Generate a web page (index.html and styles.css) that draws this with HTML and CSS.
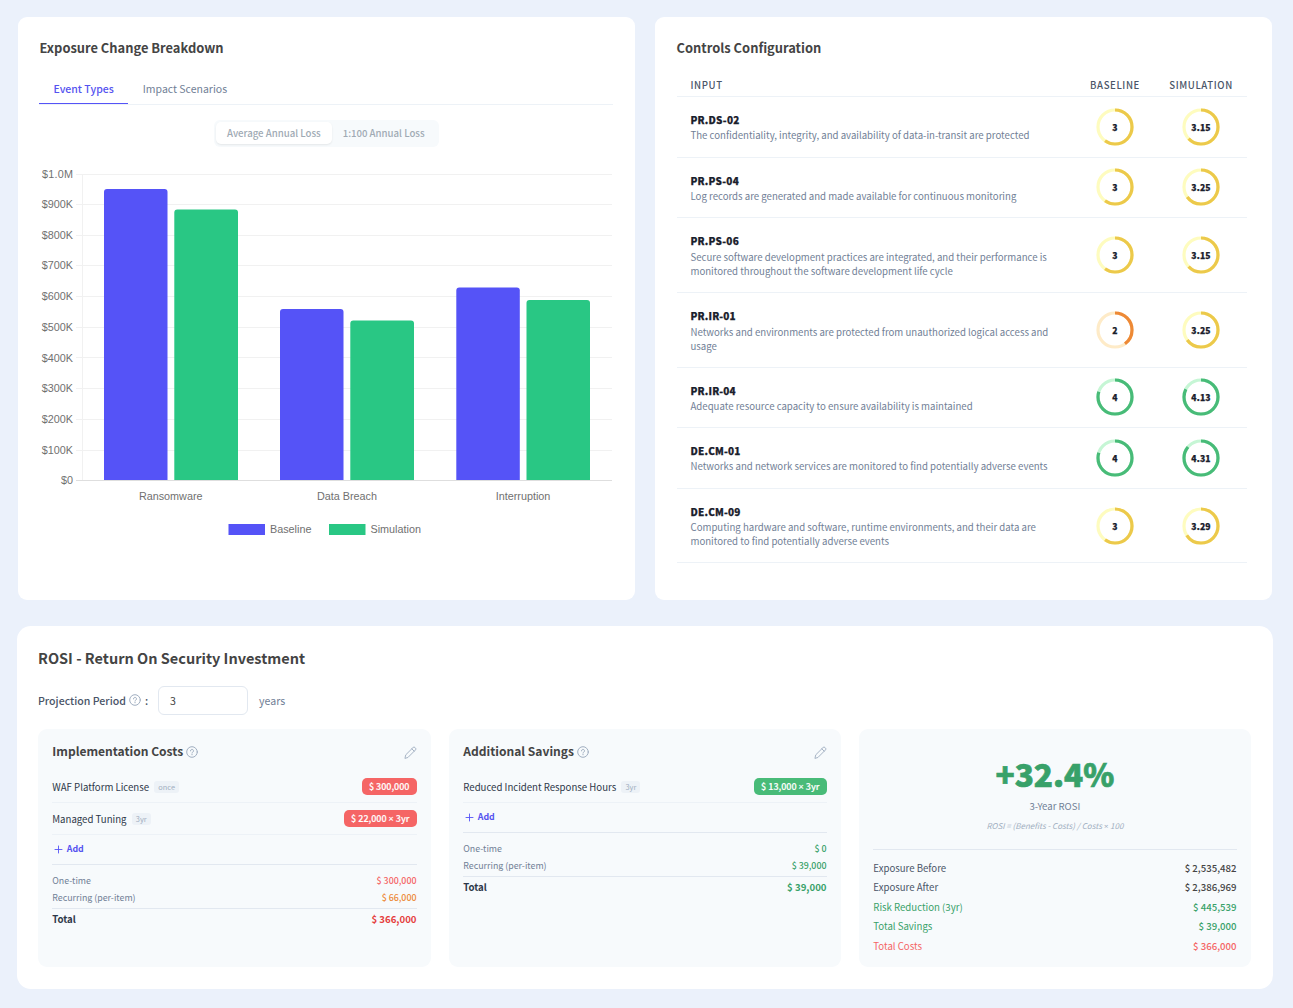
FILE: index.html
```html
<!DOCTYPE html>
<html lang="en">
<head>
<meta charset="utf-8">
<title>Exposure simulation</title>
<link rel="stylesheet" href="styles.css">
</head>
<body>
<svg class="sprite" aria-hidden="true">
  <symbol id="i-help" viewBox="0 0 12 12"><circle cx="6" cy="6" r="5.3"/><path d="M4.5 4.9a1.5 1.5 0 1 1 2.3 1.2c-.5.3-.8.5-.8 1M6 8.4v.4"/></symbol>
  <symbol id="i-pencil" viewBox="0 0 14 14"><path d="M1.100 12.900l.8-3.400 7.900-7.900a1.400 1.400 0 0 1 2 0l.6.6a1.400 1.400 0 0 1 0 2l-7.900 7.900zM8.400 3l2.600 2.600"/></symbol>
  <symbol id="i-plus" viewBox="0 0 9 9"><path d="M4.500 1v7M1 4.500h7"/></symbol>
</svg>
<main class="page">
  <div class="top">
    <section class="card chart-card">
      <h2 class="title">Exposure Change Breakdown</h2>
      <nav class="tabs"><span class="tab tab-on">Event Types</span><span class="tab">Impact Scenarios</span></nav>
      <div class="switch"><span class="opt opt-on">Average Annual Loss</span><span class="opt">1:100 Annual Loss</span></div>
      <svg class="chart" width="574" height="390" viewBox="39 160 574 390">
        <g class="grid">
          <path d="M76 174.5H612M76 204.5H612M76 235.5H612M76 265.5H612M76 296.5H612M76 327.5H612M76 357.5H612M76 388.5H612M76 419.5H612M76 450.5H612M82.5 174V480"/>
        </g>
        <path class="axis" d="M76 480.5H612"/>
        <g class="base">
          <path d="M104 480V192q0-3 3-3H164.500q3 0 3 3V480z"/>
          <path d="M280 480V312q0-3 3-3H340.500q3 0 3 3V480z"/>
          <path d="M456.300 480V290.500q0-3 3-3H516.800q3 0 3 3V480z"/>
          <rect x="228.500" y="524" width="36.500" height="11"/>
        </g>
        <g class="sim">
          <path d="M174.300 480V212.500q0-3 3-3H235q3 0 3 3V480z"/>
          <path d="M350.300 480V323.500q0-3 3-3H411q3 0 3 3V480z"/>
          <path d="M526.500 480V303q0-3 3-3H587q3 0 3 3V480z"/>
          <rect x="329" y="524" width="36.500" height="11"/>
        </g>
        <g class="end">
          <text x="73" y="178.300" textLength="31">$1.0M</text><text x="73" y="208.300">$900K</text><text x="73" y="239.300">$800K</text><text x="73" y="269.300">$700K</text><text x="73" y="300.300">$600K</text><text x="73" y="331">$500K</text><text x="73" y="361.500">$400K</text><text x="73" y="392.300">$300K</text><text x="73" y="423">$200K</text><text x="73" y="454">$100K</text><text x="73" y="484.300">$0</text>
        </g>
        <g class="mid">
          <text x="170.700" y="500.300">Ransomware</text><text x="347" y="500.300">Data Breach</text><text x="523" y="500.300">Interruption</text>
        </g>
        <text x="270" y="533.300">Baseline</text><text x="370.500" y="533.300">Simulation</text>
      </svg>
    </section>

    <section class="card">
      <h2 class="title">Controls Configuration</h2>
      <div class="table">
        <div class="row head"><span>INPUT</span><span class="c">BASELINE</span><span class="c">SIMULATION</span></div>
        <div class="row">
          <div><h3>PR.DS-02</h3><p>The confidentiality, integrity, and availability of data-in-transit are protected</p></div>
          <div class="ring yellow"><svg viewBox="0 0 38 38"><circle cx="19" cy="19" r="17"/><circle class="val" cx="19" cy="19" r="17" pathLength="100" stroke-dasharray="60 100"/></svg><b>3</b></div>
          <div class="ring yellow"><svg viewBox="0 0 38 38"><circle cx="19" cy="19" r="17"/><circle class="val" cx="19" cy="19" r="17" pathLength="100" stroke-dasharray="63 100"/></svg><b>3.15</b></div>
        </div>
        <div class="row">
          <div><h3>PR.PS-04</h3><p>Log records are generated and made available for continuous monitoring</p></div>
          <div class="ring yellow"><svg viewBox="0 0 38 38"><circle cx="19" cy="19" r="17"/><circle class="val" cx="19" cy="19" r="17" pathLength="100" stroke-dasharray="60 100"/></svg><b>3</b></div>
          <div class="ring yellow"><svg viewBox="0 0 38 38"><circle cx="19" cy="19" r="17"/><circle class="val" cx="19" cy="19" r="17" pathLength="100" stroke-dasharray="65 100"/></svg><b>3.25</b></div>
        </div>
        <div class="row two">
          <div><h3>PR.PS-06</h3><p>Secure software development practices are integrated, and their performance is monitored throughout the software development life cycle</p></div>
          <div class="ring yellow"><svg viewBox="0 0 38 38"><circle cx="19" cy="19" r="17"/><circle class="val" cx="19" cy="19" r="17" pathLength="100" stroke-dasharray="60 100"/></svg><b>3</b></div>
          <div class="ring yellow"><svg viewBox="0 0 38 38"><circle cx="19" cy="19" r="17"/><circle class="val" cx="19" cy="19" r="17" pathLength="100" stroke-dasharray="63 100"/></svg><b>3.15</b></div>
        </div>
        <div class="row two">
          <div><h3>PR.IR-01</h3><p>Networks and environments are protected from unauthorized logical access and usage</p></div>
          <div class="ring orange"><svg viewBox="0 0 38 38"><circle cx="19" cy="19" r="17"/><circle class="val" cx="19" cy="19" r="17" pathLength="100" stroke-dasharray="40 100"/></svg><b>2</b></div>
          <div class="ring yellow"><svg viewBox="0 0 38 38"><circle cx="19" cy="19" r="17"/><circle class="val" cx="19" cy="19" r="17" pathLength="100" stroke-dasharray="65 100"/></svg><b>3.25</b></div>
        </div>
        <div class="row">
          <div><h3>PR.IR-04</h3><p>Adequate resource capacity to ensure availability is maintained</p></div>
          <div class="ring green"><svg viewBox="0 0 38 38"><circle cx="19" cy="19" r="17"/><circle class="val" cx="19" cy="19" r="17" pathLength="100" stroke-dasharray="80 100"/></svg><b>4</b></div>
          <div class="ring green"><svg viewBox="0 0 38 38"><circle cx="19" cy="19" r="17"/><circle class="val" cx="19" cy="19" r="17" pathLength="100" stroke-dasharray="82.6 100"/></svg><b>4.13</b></div>
        </div>
        <div class="row">
          <div><h3>DE.CM-01</h3><p>Networks and network services are monitored to find potentially adverse events</p></div>
          <div class="ring green"><svg viewBox="0 0 38 38"><circle cx="19" cy="19" r="17"/><circle class="val" cx="19" cy="19" r="17" pathLength="100" stroke-dasharray="80 100"/></svg><b>4</b></div>
          <div class="ring green"><svg viewBox="0 0 38 38"><circle cx="19" cy="19" r="17"/><circle class="val" cx="19" cy="19" r="17" pathLength="100" stroke-dasharray="86.2 100"/></svg><b>4.31</b></div>
        </div>
        <div class="row two">
          <div><h3>DE.CM-09</h3><p>Computing hardware and software, runtime environments, and their data are monitored to find potentially adverse events</p></div>
          <div class="ring yellow"><svg viewBox="0 0 38 38"><circle cx="19" cy="19" r="17"/><circle class="val" cx="19" cy="19" r="17" pathLength="100" stroke-dasharray="60 100"/></svg><b>3</b></div>
          <div class="ring yellow"><svg viewBox="0 0 38 38"><circle cx="19" cy="19" r="17"/><circle class="val" cx="19" cy="19" r="17" pathLength="100" stroke-dasharray="65.8 100"/></svg><b>3.29</b></div>
        </div>
      </div>
    </section>
  </div>

  <section class="rosi">
    <h2 class="rosi-title">ROSI - Return On Security Investment</h2>
    <div class="period"><span class="plabel">Projection Period</span><svg class="icon help"><use href="#i-help"/></svg><span class="plabel colon">:</span><span class="field">3</span><span class="unit">years</span></div>
    <div class="panels">
      <div class="panel">
        <div class="phead"><h3>Implementation Costs</h3><svg class="icon help"><use href="#i-help"/></svg><svg class="icon pencil"><use href="#i-pencil"/></svg></div>
        <div class="item"><span>WAF Platform License</span><span class="tag">once</span><span class="pill red">$ 300,000</span></div>
        <div class="item"><span>Managed Tuning</span><span class="tag">3yr</span><span class="pill red">$ 22,000 <span class="x">×</span> 3yr</span></div>
        <div class="add"><svg class="icon plus"><use href="#i-plus"/></svg>Add</div>
        <div class="sums">
          <div class="sum"><span>One-time</span><span class="amt t-red">$ 300,000</span></div>
          <div class="sum"><span>Recurring (per-item)</span><span class="amt t-orange">$ 66,000</span></div>
        </div>
        <div class="total"><span>Total</span><span class="t-deep">$ 366,000</span></div>
      </div>
      <div class="panel">
        <div class="phead"><h3>Additional Savings</h3><svg class="icon help"><use href="#i-help"/></svg><svg class="icon pencil"><use href="#i-pencil"/></svg></div>
        <div class="item"><span>Reduced Incident Response Hours</span><span class="tag">3yr</span><span class="pill grn">$ 13,000 <span class="x">×</span> 3yr</span></div>
        <div class="add"><svg class="icon plus"><use href="#i-plus"/></svg>Add</div>
        <div class="sums">
          <div class="sum"><span>One-time</span><span class="amt t-green">$ 0</span></div>
          <div class="sum"><span>Recurring (per-item)</span><span class="amt t-green">$ 39,000</span></div>
        </div>
        <div class="total"><span>Total</span><span class="t-green">$ 39,000</span></div>
      </div>
      <div class="panel result">
        <div class="big">+32.4%</div>
        <div class="sub">3-Year ROSI</div>
        <div class="formula">ROSI = (Benefits - Costs) / Costs <span class="x">×</span> 100</div>
        <div class="lines">
          <div class="line"><span>Exposure Before</span><span class="amt dark">$ 2,535,482</span></div>
          <div class="line"><span>Exposure After</span><span class="amt dark">$ 2,386,969</span></div>
          <div class="line t-green"><span>Risk Reduction (3yr)</span><span class="amt">$ 445,539</span></div>
          <div class="line t-green"><span>Total Savings</span><span class="amt">$ 39,000</span></div>
          <div class="line t-red"><span>Total Costs</span><span class="amt">$ 366,000</span></div>
        </div>
      </div>
    </div>
  </section>
</main>
</body>
</html>
```
FILE: styles.css
```css
* { box-sizing: border-box; }
body { margin: 0; background: #ebf1fb; font-family: "Noto Sans CJK SC", "Noto Sans CJK JP", sans-serif; color: #2d3748; font-size: 11px; }
h2, h3, p { margin: 0; }
.sprite { display: none; }
.page { height: 1008px; overflow: hidden; padding: 17px 20px 0 17px; }
.top { display: grid; grid-template-columns: 617px 617px; gap: 20px; padding-left: 1px; }
.card { height: 583px; background: #fff; border-radius: 9px; padding: 21px 22px 0 21px; }
.title { padding-left: .5px; font-size: 12.900px; line-height: 20px; font-weight: 700; color: #444; }
.tabs { display: flex; height: 30px; margin-top: 17px; border-bottom: 1px solid #edf2f7; line-height: 27px; font-size: 10.500px; color: #718096; }
.tab { padding: 0 14.500px; height: 29px; }
.tab-on { color: #5553f0; font-weight: 500; border-bottom: 1px solid #5553f7; }
.switch { display: flex; width: 225px; height: 27px; margin: 15px 0 0 175px; padding: 2px; background: #f7fafc; border-radius: 6px; font-size: 9.650px; line-height: 23px; font-weight: 500; color: #a0aab4; }
.opt { padding: 0 11px; white-space: nowrap; }
.opt-on { background: #fff; border-radius: 5px; box-shadow: 0 1px 2px rgba(0,0,0,.08); height: 22px; line-height: 23px; }
.chart { display: block; margin-top: 13px; font: 10.800px "Liberation Sans", Arial, sans-serif; fill: #707070; }
.grid path { stroke: #f1f1f1; fill: none; }
.axis { stroke: #dedede; }
.base { fill: #5553f7; }
.sim { fill: #29c784; }
.end { text-anchor: end; }
.mid { text-anchor: middle; }

.table { width: 570.500px; margin: 17px 0 0 .5px; }
.row { display: grid; grid-template-columns: 1fr 80px 92px; align-items: center; height: 60.600px; border-bottom: 1px solid #edf2f7; padding-left: 14px; }
.row.two { height: 74.700px; }
.row.head { height: 22px; padding-bottom: 1px; font-size: 9.600px; font-weight: 500; letter-spacing: .6px; color: #4a5568; }
.c { text-align: center; }
.row h3 { font-size: 10px; line-height: 17px; font-weight: 900; color: #1a202c; letter-spacing: .2px; -webkit-text-stroke: .25px #1a202c; }
.two h3 { margin-bottom: .8px; }
.row p { width: 366px; font-size: 9.650px; line-height: 14px; color: #718096; }
.ring { display: grid; place-items: center; }
.ring svg, .ring b { grid-area: 1 / 1; }
.ring svg { width: 38px; height: 38px; fill: none; stroke-width: 3.200; transform: rotate(-90deg); }
.ring b { font-size: 8.600px; font-weight: 900; line-height: 12px; color: #1a202c; letter-spacing: .2px; -webkit-text-stroke: .25px #1a202c; }
.yellow svg { stroke: #fefcbf; } .yellow .val { stroke: #ecc94b; }
.orange svg { stroke: #feebc8; } .orange .val { stroke: #ed8936; }
.green svg { stroke: #c6f6d5; } .green .val { stroke: #48bb78; }

.rosi { width: 1256px; height: 363px; margin-top: 26px; padding: 21px 22px 0 21px; background: #fff; border-radius: 14px; }
.rosi-title { font-size: 14.500px; line-height: 22px; color: #444; }
.period { display: flex; align-items: center; height: 29px; margin-top: 17px; font-size: 10.600px; }
.plabel { font-weight: 500; color: #4a5568; }
.icon { fill: none; stroke: #a0aec0; stroke-linecap: round; stroke-linejoin: round; }
.help { width: 12px; height: 12px; margin-left: 3px; }
.period .help { margin-bottom: 2px; }
.colon { margin-left: 4px; }
.field { width: 90px; height: 29px; line-height: 28px; margin-left: 10px; border: 1px solid #e2e8f0; border-radius: 6px; padding-left: 11px; color: #444; }
.unit { margin-left: 11px; color: #718096; }
.panels { display: grid; grid-template-columns: 393px 392px 392px; gap: 18px; margin-top: 14px; }
.panel { height: 238px; background: #f7fafc; border-radius: 9px; padding: 13px 14.500px 0 14.300px; }
.phead { display: flex; align-items: center; height: 20px; }
.phead h3 { font-size: 12.050px; line-height: 18px; padding-bottom: 2px; color: #444; }
.pencil { width: 13px; height: 13px; margin-left: auto; }
.item { display: flex; align-items: center; height: 32px; border-bottom: 1px solid #edf2f7; font-size: 9.650px; }
.phead + .item { margin-top: 9px; }
.tag { margin-left: 5.300px; padding: 0 4px; height: 12px; line-height: 12px; font-size: 7.400px; color: #a0aec0; background: #edf2f7; border-radius: 3px; }
.pill { margin-left: auto; height: 17px; line-height: 17px; padding: 0 7px; border-radius: 5px; color: #fff; font-weight: 500; font-size: 9px; -webkit-text-stroke: .15px #fff; }
.x { font-family: "Open Sans", sans-serif; font-size: 1em; line-height: 1; }
.red { background: #f56565; } .grn { background: #48bb78; }
.add { display: flex; align-items: center; height: 29px; padding-bottom: 2px; color: #5553f0; font-size: 8.800px; font-weight: 700; }
.plus { width: 9px; height: 9px; margin: 2px 4px 0 1.500px; stroke: #5553f7; stroke-width: .9; }
.sums { border-top: 1px solid #e2e8f0; border-bottom: 1px solid #e2e8f0; padding-top: 8px; height: 45px; }
.sum { display: flex; justify-content: space-between; height: 17px; line-height: 16px; font-size: 8.850px; color: #718096; }
.amt { font-weight: 500; }
.total { display: flex; justify-content: space-between; height: 21px; line-height: 20.500px; font-size: 9.650px; font-weight: 700; }
.t-red { color: #f56565; } .t-orange { color: #ed8936; } .t-deep { color: #e53e3e; } .t-green { color: #38a169; }
.result { text-align: center; }
.big { margin-top: 8px; font-size: 31.500px; line-height: 46px; font-weight: 900; color: #38a169; -webkit-text-stroke: .7px #38a169; }
.sub { margin-top: 2px; font-size: 9.600px; line-height: 16px; color: #718096; }
.formula { margin-top: 4px; font-size: 8px; line-height: 15px; font-style: italic; color: #a0aec0; }
.lines { margin-top: 16px; padding-top: 9px; border-top: 1px solid #e2e8f0; }
.line { display: flex; justify-content: space-between; height: 19.400px; line-height: 19.200px; font-size: 9.650px; }
.line:not(.t-green):not(.t-red) { color: #4a5568; }
.line .dark { color: #444; }
```
